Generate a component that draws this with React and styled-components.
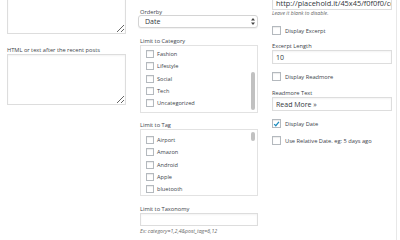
import React from 'react';
import styled, { createGlobalStyle } from 'styled-components';

const GlobalStyle = createGlobalStyle`
  html, body { margin: 0; padding: 0; background: #fff; }
  body { width: 400px; height: 240px; overflow: hidden; font-family: "Open Sans", "Liberation Sans", sans-serif; }
`;

const Panel = styled.div`
  display: grid;
  grid-template-columns: 119px 118px 120px;
  column-gap: 14px;
  width: 397px;
  height: 260px;
  margin-top: -20px;
  padding: 0 4px 0 7px;
  box-sizing: border-box;
  border-right: 1px solid #e8e8e8;
  overflow: hidden;
`;

const Column = styled.div`
  display: flex;
  flex-direction: column;
  padding-top: ${p => p.$top || 0}px;
`;

const Label = styled.div`
  font-size: 5.7px;
  line-height: 8px;
  color: #3c434a;
  margin-top: ${p => p.$mt || 0}px;
  white-space: nowrap;
`;

const Hint = styled.div`
  font-size: 5.2px;
  line-height: 7px;
  font-style: italic;
  color: #666;
  margin-top: ${p => p.$mt || 0}px;
  white-space: nowrap;
`;

const TextArea = styled.textarea`
  display: block;
  box-sizing: border-box;
  width: 100%;
  height: ${p => p.$h}px;
  margin: 0;
  border: 1px solid #ddd;
  box-shadow: inset 0 1px 2px rgba(0, 0, 0, 0.05);
  resize: vertical;
  background: #fff;
  outline: none;
`;

const Select = styled.div`
  display: flex;
  align-items: center;
  justify-content: space-between;
  box-sizing: border-box;
  height: 13px;
  margin: -1px 0 0 -2px;
  padding: 0 2px 0 6px;
  border: 1px solid #d4d4d4;
  border-radius: 3px;
  box-shadow: 0 1px 1px rgba(0, 0, 0, 0.06);
  font-size: 7px;
  color: #32373c;
  background: #fff;
`;

const Input = styled.div`
  display: flex;
  align-items: center;
  box-sizing: border-box;
  height: ${p => p.$h || 14}px;
  padding: 0 3px;
  border: 1px solid #ddd;
  box-shadow: inset 0 1px 2px rgba(0, 0, 0, 0.05);
  font-size: ${p => p.$fs || 7}px;
  color: #32373c;
  white-space: nowrap;
  overflow: hidden;
`;

const ListBox = styled.div`
  display: flex;
  box-sizing: border-box;
  height: ${p => p.$h}px;
  border: 1px solid #e2e2e2;
  background: #fff;
  overflow: hidden;
`;

const List = styled.div`
  flex: 1;
  padding: ${p => p.$pt}px 0 0 5px;
`;

const Item = styled.div`
  display: flex;
  align-items: center;
  gap: 3px;
  height: 12.3px;
  font-size: 5.6px;
  color: #3c434a;
`;

const Box = styled.span`
  display: inline-flex;
  align-items: center;
  justify-content: center;
  box-sizing: border-box;
  width: ${p => p.$size}px;
  height: ${p => p.$size}px;
  border: 1px solid #b4b9be;
  background: #fff;
  box-shadow: inset 0 1px 1px rgba(0, 0, 0, 0.08);
  flex-shrink: 0;
`;

const Track = styled.div`
  width: 5px;
  padding: 0 1px 0 0;
`;

const Thumb = styled.div`
  width: 4px;
  margin-top: ${p => p.$mt}px;
  height: ${p => p.$h}px;
  border-radius: 2px;
  background: #c1c1c1;
`;

const CheckRow = styled.div`
  display: flex;
  align-items: center;
  gap: 4px;
  height: 9px;
  margin-top: ${p => p.$mt || 0}px;
  font-size: 5.7px;
  color: #3c434a;
`;

const Arrows = () => (
  <svg width="4" height="7" viewBox="0 0 4 7">
    <path d="M2 0 L4 2.6 L0 2.6 Z M2 7 L4 4.4 L0 4.4 Z" fill="#444" />
  </svg>
);

const Check = () => (
  <svg width="8" height="8" viewBox="0 0 8 8">
    <path d="M1.3 4.2 L3.2 6 L6.8 1.6" stroke="#1e8cbe" strokeWidth="1.4" fill="none" />
  </svg>
);

function CheckList({ items, h, pt, thumbTop, thumbH }) {
  return (
    <ListBox $h={h}>
      <List $pt={pt}>
        {items.map(name => (
          <Item key={name}>
            <Box $size={8} />
            {name}
          </Item>
        ))}
      </List>
      <Track>
        <Thumb $mt={thumbTop} $h={thumbH} />
      </Track>
    </ListBox>
  );
}

function Checkbox({ label, checked, mt }) {
  return (
    <CheckRow $mt={mt}>
      <Box $size={9}>{checked && <Check />}</Box>
      {label}
    </CheckRow>
  );
}

export default function App() {
  return (
    <>
      <GlobalStyle />
      <Panel>
        <Column>
          <TextArea $h={54} />
          <Label $mt={12}>HTML or text after the recent posts</Label>
          <TextArea $h={51} />
        </Column>

        <Column $top={28}>
          <Label>Orderby</Label>
          <Select>
            Date
            <Arrows />
          </Select>
          <Label $mt={9}>Limit to Category</Label>
          <CheckList
            items={['Fashion', 'Lifestyle', 'Social', 'Tech', 'Uncategorized']}
            h={68}
            pt={2}
            thumbTop={26}
            thumbH={38}
          />
          <Label $mt={8}>Limit to Tag</Label>
          <CheckList
            items={['Airport', 'Amazon', 'Android', 'Apple', 'bluetooth']}
            h={67}
            pt={4}
            thumbTop={2}
            thumbH={9}
          />
          <Label $mt={9}>Limit to Taxonomy</Label>
          <Input $h={13} />
          <Hint $mt={2}>Ex: category=1,2,4&amp;post_tag=6,12</Hint>
        </Column>

        <Column $top={15}>
          <Input $h={15} $fs={7.4}>http://placehold.it/45x45/f0f0f0/ccc</Input>
          <Hint>Leave it blank to disable.</Hint>
          <Checkbox label="Display Excerpt" mt={9} />
          <Label $mt={7}>Excerpt Length</Label>
          <Input $h={14}>10</Input>
          <Checkbox label="Display Readmore" mt={8} />
          <Label $mt={8}>Readmore Text</Label>
          <Input $h={14}>Read More »</Input>
          <Checkbox label="Display Date" checked mt={8} />
          <Checkbox label="Use Relative Date. eg: 5 days ago" mt={8} />
        </Column>
      </Panel>
    </>
  );
}
